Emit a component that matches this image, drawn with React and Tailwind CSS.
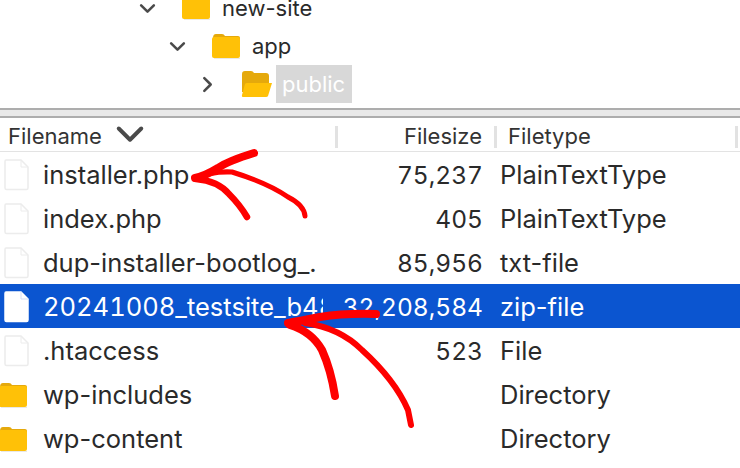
const rows = [
  { name: "installer.php", size: "75,237", type: "PlainTextType", icon: "file" },
  { name: "index.php", size: "405", type: "PlainTextType", icon: "file" },
  { name: "dup-installer-bootlog_.", size: "85,956", type: "txt-file", icon: "file" },
  { name: "20241008_testsite_b48", size: "32,208,584", type: "zip-file", icon: "file", selected: true },
  { name: ".htaccess", size: "523", type: "File", icon: "file" },
  { name: "wp-includes", size: "", type: "Directory", icon: "folder" },
  { name: "wp-content", size: "", type: "Directory", icon: "folder" },
];

const Folder = ({ className }) => (
  <svg viewBox="0 0 28 26" className={className}>
    <path d="M1 5 Q1 1 4 1 H10 Q12 1 13 3 H26 Q28 3 28 5 V10 H1 Z" fill="#e5a90c" />
    <rect x="0" y="4" width="28" height="21" rx="2" fill="#ffc107" />
    <rect x="2" y="25" width="26" height="1" fill="#e8e8e8" />
  </svg>
);

const OpenFolder = ({ className }) => (
  <svg viewBox="0 0 32 28" className={className}>
    <path d="M1 4 Q1 1 4 1 H10 Q12 1 13 3 H25 Q28 3 28 6 V22 H1 Z" fill="#e5a90c" />
    <path d="M4 14 Q4.500 13 6 13 H31 L27 26 Q26.500 27 25 27 H2 Q0.500 27 1 25 Z" fill="#ffc107" />
  </svg>
);

const FileIcon = ({ selected }) => (
  <svg viewBox="0 0 25 32" className="w-[25px] h-[32px] shrink-0">
    <path
      d="M2 1 H17 L24 8 V29 Q24 30.500 22.500 30.500 H2.500 Q1 30.500 1 29 V2.500 Q1 1 2 1 Z"
      fill="#fff"
      stroke={selected ? "#fff" : "#ececec"}
      strokeWidth="1.500"
    />
    <path d="M17 1 V8 H24" fill="none" stroke={selected ? "#d5def5" : "#ececec"} strokeWidth="1" />
  </svg>
);

const Chevron = ({ className, d, width = 2.4 }) => (
  <svg viewBox="0 0 16 16" className={className}>
    <path d={d} fill="none" stroke="#4a4a4a" strokeWidth={width} strokeLinecap="round" strokeLinejoin="round" />
  </svg>
);

const TreeRow = ({ left, chevron, icon, children }) => (
  <div className="h-[38px] flex items-center" style={{ paddingLeft: left }}>
    {chevron}
    {icon}
    {children}
  </div>
);

const App = () => {
  return (
    <div
      className="relative w-[740px] h-[468px] overflow-hidden bg-white text-[#2a2a2a]"
      style={{ fontFamily: "Inter, 'Noto Sans', sans-serif" }}
    >
      {/* remote site tree */}
      <div className="h-[108px] overflow-hidden">
        <div className="-mt-[11px] text-[22px]">
          <TreeRow
            left={139}
            chevron={<Chevron className="w-[17px] h-[17px] mr-[26px] shrink-0" d="M2 5 L8 11 L14 5" />}
            icon={<Folder className="w-[28px] h-[26px] shrink-0 -mt-[2px]" />}
          >
            <span className="ml-[12px]">new-site</span>
          </TreeRow>
          <TreeRow
            left={169}
            chevron={<Chevron className="w-[17px] h-[17px] mr-[26px] shrink-0" d="M2 5 L8 11 L14 5" />}
            icon={<Folder className="w-[28px] h-[26px] shrink-0" />}
          >
            <span className="ml-[12px]">app</span>
          </TreeRow>
          <TreeRow
            left={199}
            chevron={<Chevron className="w-[17px] h-[17px] mr-[26px] shrink-0" d="M5 2 L11 8 L5 14" />}
            icon={<OpenFolder className="w-[32px] h-[28px] shrink-0 -ml-[1px]" />}
          >
            <span className="ml-[3px] px-[6px] h-[38px] w-[76px] flex items-center bg-[#d8d8d8] text-white">public</span>
          </TreeRow>
          <TreeRow left={212} icon={<Folder className="w-[28px] h-[26px] shrink-0 mt-[24px]" />} />
        </div>
      </div>

      {/* splitter */}
      <div className="h-[10px] bg-[#e9e9e9] border-y-2 border-[#adadad]" />

      {/* column headers */}
      <div className="h-[34px] pt-[4px] flex items-center border-b border-[#e3e3e3] text-[22px] text-[#333]">
        <div className="w-[335px] pl-[8px] flex items-center shrink-0">
          <span>Filename</span>
          <Chevron className="w-[30px] h-[30px] ml-[13px] -mt-[1px]" d="M2 4 L8 10 L14 4" width={2.100} />
        </div>
        <div className="w-[3px] h-[22px] bg-[#e2e2e2] shrink-0" />
        <div className="w-[144px] text-right shrink-0">Filesize</div>
        <div className="w-[12px] shrink-0" />
        <div className="w-[3px] h-[22px] bg-[#e2e2e2] shrink-0" />
        <div className="w-[238px] pl-[11px] shrink-0">Filetype</div>
        <div className="w-[3px] h-[22px] bg-[#e2e2e2] shrink-0" />
      </div>

      {/* file list */}
      <div className="text-[25.5px]">
        {rows.map((row) => (
          <div
            key={row.name}
            className={`h-[44px] pt-[2px] flex items-center ${row.selected ? "bg-[#0b55d0] text-white" : ""}`}
          >
            <div className="w-[43px] shrink-0 flex items-center">
              {row.icon === "file" ? (
                <div className="pl-[4px]">
                  <FileIcon selected={row.selected} />
                </div>
              ) : (
                <Folder className="w-[28px] h-[26px] -ml-[1px]" />
              )}
            </div>
            <div className={`w-[280px] shrink-0 overflow-hidden whitespace-nowrap ${row.selected ? "tabular-nums" : ""}`}>
              {row.name}
            </div>
            <div className="w-[160px] shrink-0 text-right whitespace-nowrap tabular-nums text-[24.5px]">{row.size}</div>
            <div className="pl-[17px] whitespace-nowrap">{row.type}</div>
          </div>
        ))}
      </div>

      {/* hand drawn arrows */}
      <svg viewBox="0 0 740 468" className="absolute inset-0 w-[740px] h-[468px] pointer-events-none">
        <g fill="none" stroke="#fe0000" strokeLinecap="round" strokeLinejoin="round">
          <path d="M254 153 Q228 161 218 168 Q205 176 195 178" strokeWidth="8" />
          <path d="M196 178 Q212 171 232 172 Q268 183 288 197 Q304 205 305 216" strokeWidth="5" />
          <path d="M196 179 Q218 181 229 194 Q240 205 247 217" strokeWidth="6.500" />
          <path d="M376 314 Q345 313 320 317 Q300 321 288 323" strokeWidth="8" />
          <path d="M290 325 Q312 332 322 350 Q331 370 335 396" strokeWidth="8" />
          <path d="M305 323 Q340 328 362 350 Q395 380 408 410 L411 425" strokeWidth="6" />
        </g>
      </svg>
    </div>
  );
};

export default App;
